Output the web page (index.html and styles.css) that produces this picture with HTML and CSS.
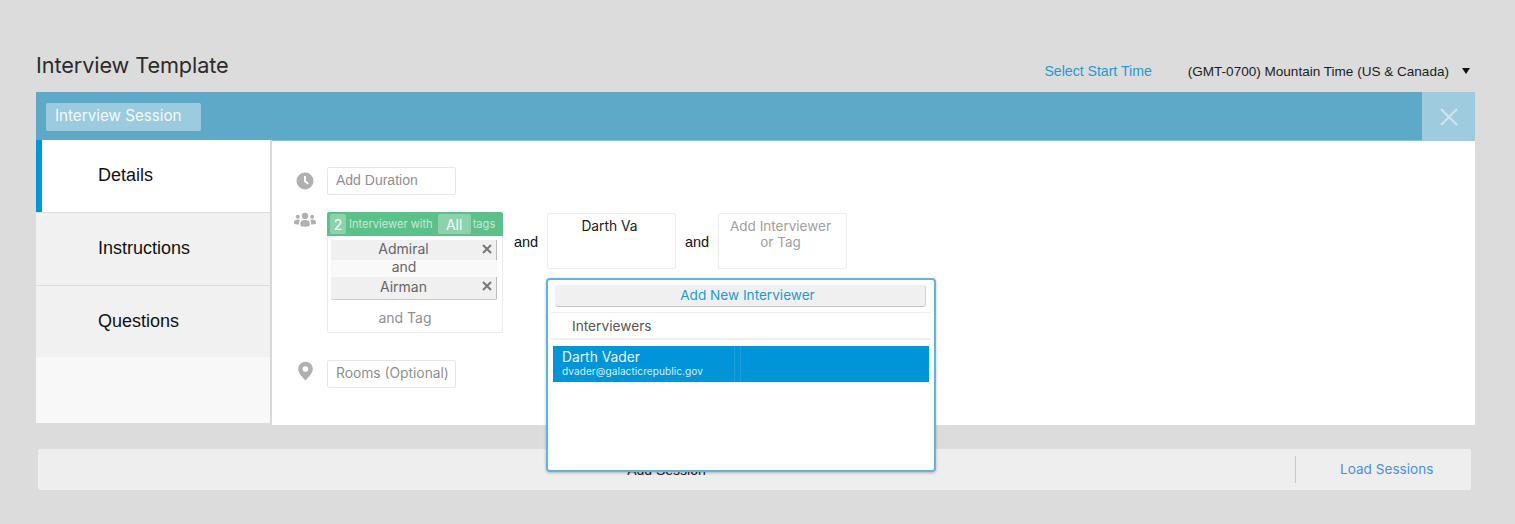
FILE: index.html
```html
<!DOCTYPE html>
<html lang="en">
<head>
<meta charset="utf-8">
<title>Interview Template</title>
<link rel="stylesheet" href="styles.css">
</head>
<body>
<main class="page">
  <header class="top">
    <h1 class="title">Interview Template</h1>
    <div class="top-right">
      <a class="start-time">Select Start Time</a>
      <span class="timezone">(GMT-0700) Mountain Time (US &amp; Canada)</span>
      <span class="caret"></span>
    </div>
  </header>
  <section class="card">
    <div class="bar">
      <div class="session-name">Interview Session</div>
      <button class="close" aria-label="Close">
        <svg width="20" height="20" viewBox="0 0 20 20"><path d="M2 2 18 18M18 2 2 18" stroke="#cfe5ee" stroke-width="2.200" fill="none"/></svg>
      </button>
    </div>
    <div class="body">
      <nav class="side">
        <div class="tab active">Details</div>
        <div class="tab">Instructions</div>
        <div class="tab">Questions</div>
      </nav>
      <div class="content">
        <div class="row row-duration">
          <svg class="icon" width="18" height="18" viewBox="0 0 18 18"><circle cx="9" cy="9" r="8.500" fill="#b0b0b0"/><path d="M9 4v5.300l3.200 2.400" stroke="#fff" stroke-width="2" fill="none"/></svg>
          <div class="field field-duration">Add Duration</div>
        </div>
        <div class="row row-people">
          <svg class="icon icon-people" width="22" height="16" viewBox="0 0 24 17"><g fill="#b0b0b0"><circle cx="12" cy="4" r="3.400"/><circle cx="4.200" cy="5" r="2.100"/><circle cx="19.800" cy="5" r="2.100"/><path d="M7 15v-3.500C7 9.500 9 8.500 12 8.500s5 1 5 3V15q-5 1.500-10 0z"/><path d="M0 11.500C0 9 1.500 8 4.200 8q1.300 0 2.300.5Q5.500 9.600 5.500 11.500v1.800Q1.500 13.500 0 12.500z"/><path d="M24 11.500C24 9 22.500 8 19.800 8q-1.300 0-2.300.5 1 1.100 1 3v1.800q4 .2 5.500-.8z"/></g></svg>
          <div class="tag-box">
            <div class="tag-head"><span class="pill pill-num">2</span><span class="head-text">Interviewer with</span><span class="pill pill-all">All</span><span class="head-text">tags</span></div>
            <div class="tags">
              <div class="tag">Admiral<svg class="x" width="10" height="10" viewBox="0 0 10 10"><path d="M1 1 9 9M9 1 1 9" stroke="#777" stroke-width="2" fill="none"/></svg></div>
              <div class="tag-and">and</div>
              <div class="tag tag-last">Airman<svg class="x" width="10" height="10" viewBox="0 0 10 10"><path d="M1 1 9 9M9 1 1 9" stroke="#777" stroke-width="2" fill="none"/></svg></div>
            </div>
            <div class="and-tag">and Tag</div>
          </div>
          <span class="and and-first">and</span>
          <div class="slot slot-typed">Darth Va</div>
          <span class="and">and</span>
          <div class="slot slot-add">Add Interviewer<br>or Tag</div>
        </div>
        <div class="row row-rooms">
          <svg class="icon icon-pin" width="15" height="20" viewBox="0 0 16 20"><path fill-rule="evenodd" fill="#b0b0b0" d="M8 0a7.800 7.800 0 0 1 7.800 7.800C15.800 12 11 17 8 20 5 17 .2 12 .2 7.800A7.800 7.800 0 0 1 8 0zm0 4.800a3 3 0 1 0 0 6 3 3 0 0 0 0-6z"/></svg>
          <div class="field field-rooms">Rooms (Optional)</div>
        </div>
      </div>
    </div>
  </section>
  <footer class="foot">
    <div class="add-session">Add Session</div>
    <div class="load-sessions"><a>Load Sessions</a></div>
  </footer>
  <div class="popup">
    <div class="popup-btn">Add New Interviewer</div>
    <div class="popup-label">Interviewers</div>
    <div class="result">
      <div class="result-name">Darth Vader</div>
      <div class="result-mail">dvader@galacticrepublic.gov</div>
    </div>
  </div>
</main>
</body>
</html>
```
FILE: styles.css
```css
* { box-sizing: border-box; }
html, body { margin: 0; height: 100%; }
body { background: #dcdcdc; font-family: "Inter", "Liberation Sans", sans-serif; overflow: hidden; }
.page { position: relative; width: 1515px; height: 524px; padding: 0 40px 0 36px; }

.top { height: 92px; display: flex; justify-content: space-between; }
.title { margin: 50px 0 0; font: 400 21.700px/30px "Inter", sans-serif; color: #2b2b2b; letter-spacing: -0.1px; }
.top-right { display: flex; align-items: center; height: 20px; margin-top: 61px; padding-right: 5px; font-family: "Liberation Sans", sans-serif; font-size: 13.550px; }
.start-time { color: #1b9ad6; font-size: 14.100px; margin-right: 36px; }
.timezone { color: #1c1c1c; }
.caret { width: 0; height: 0; margin-left: 13px; border: 4px solid transparent; border-top: 6px solid #111; border-bottom: 0; }

.card { height: 333px; }
.bar { height: 49px; background: #5fa9c8; display: flex; justify-content: space-between; border-bottom: 1px solid #8dc1d8; }
.session-name { width: 155px; height: 28px; margin: 11px 0 0 10px; padding-left: 9px; background: #9ccbdf; border-radius: 2px; color: #f2f8fb; font-size: 15.200px; line-height: 25px; }
.close { width: 53px; height: 49px; padding: 0; border: 0; background: #9ecbde; display: flex; align-items: center; justify-content: center; }

.body { display: flex; height: 284px; }
.side { width: 236px; height: 283px; margin-top: -1px; background: #f8f8f8; border-right: 2px solid #d8d8d8; }
.tab { height: 73px; padding: 0 0 1px 62px; background: #f1f1f1; border-top: 1px solid #dcdcdc; font: 18px/70px "Liberation Sans", sans-serif; color: #111; }
.tab:nth-child(3) { height: 72px; }
.tab.active { height: 72px; background: #fff; border-top: 0; border-left: 6px solid #0095da; padding-left: 56px; line-height: 70px; }
.content { flex: 1; padding-top: 26px; background: #fff; }

.row { display: flex; align-items: flex-start; position: relative; }
.icon { flex: none; }
.row-duration .icon { margin: 5px 13px 0 24px; }
.row-people { margin-top: 17px; height: 148px; }
.icon-people { margin: 0 11px 0 22px; }
.icon-pin { margin: 1px 14px 0 26px; }
.field { width: 129px; height: 28px; padding-left: 8px; border: 1px solid #e7e7e7; border-radius: 2px; font-size: 13.800px; line-height: 25px; color: #8f8f8f; white-space: nowrap; }
.field-duration { font-family: "Liberation Sans", sans-serif; font-size: 14px; }

.tag-box { width: 176px; height: 121px; border: 1px solid #ececec; border-top: 0; border-radius: 2px; }
.tag-head { height: 24px; margin: 0 -1px; padding-left: 3px; display: flex; align-items: center; background: #5cc08a; border-radius: 2px 2px 0 0; color: #c5e9d5; font-size: 11.100px; white-space: nowrap; }
.pill { display: block; height: 20px; background: #8dd2ad; border-radius: 2px; color: #f3fbf6; font-size: 14px; line-height: 21px; text-align: center; }
.pill-num { width: 16px; }
.pill-all { width: 33px; margin-right: 2px; }
.head-text { margin-left: 3px; margin-right: 5px; }
.head-text:last-child { margin: 0; }
.tags { margin: 4px 5px 0 3px; font-size: 14px; color: #666; text-align: center; }
.tag { position: relative; height: 20px; padding-right: 20px; line-height: 18px; background: #f0f0f0; border-right: 1px solid #bbb; }
.tag-and { height: 17px; padding-right: 20px; line-height: 14px; background: #f9f9f9; }
.tag-last { height: 23px; line-height: 19px; border-bottom: 1px solid #ccc; border-radius: 0 0 2px 2px; }
.x { position: absolute; right: 4px; top: 4px; }
.and-tag { margin-top: 8px; padding-right: 20px; text-align: center; font-size: 14px; line-height: 20px; color: #8f8f8f; }

.and { flex: none; width: 42px; margin-top: 20px; text-align: center; font: 14.500px/20px "Liberation Sans", sans-serif; color: #111; }
.and-first { width: 44px; padding-left: 2px; }
.slot { width: 129px; height: 56px; margin-top: 1px; padding: 4px 4px 0 0; border: 1px solid #ececec; border-radius: 2px; text-align: center; font-size: 14px; line-height: 16px; }
.slot-typed { color: #222; font-size: 13.800px; }
.slot-add { color: #a0a0a0; font-size: 13.500px; }

.foot { position: relative; height: 41px; margin: 24px 4px 0 2px; display: flex; background: #eee; border-radius: 2px; }
.add-session { width: 1257px; text-align: center; font: 14px/43px "Liberation Sans", sans-serif; color: #222; }
.load-sessions { flex: 1; margin: 7px 0; padding-left: 44px; border-left: 1px solid #c9c9c9; font-size: 13.600px; line-height: 26px; color: #4a90d9; }

.popup { position: absolute; left: 546px; top: 278px; width: 390px; height: 194px; padding: 5px 8px 0 6px; background: #fff; border: 2px solid #58b7e4; border-radius: 4px; box-shadow: 0 1px 3px rgba(0,0,0,.25); }
.popup-btn { height: 22px; margin: 0 0 5px 1px; padding-left: 15px; background: #f0f0f0; border-radius: 3px; border-bottom: 1px solid #c6c6c6; border-right: 1px solid #d0d0d0; text-align: center; font-size: 13.600px; line-height: 20px; color: #1b9ad6; }
.popup-label { height: 28px; margin: 0 -5px 6px -3px; padding-left: 21px; border-top: 1px solid #efefef; border-bottom: 2px solid #efefef; font-size: 13.700px; line-height: 26px; color: #555; }
.result { height: 36px; margin: 0 -3px 0 -1px; padding: 4px 9px 0; background: linear-gradient(to right, #0095d9 181px, #1a9fdc 181px, #1a9fdc 182px, #0095d9 182px, #0095d9 187px, #1a9fdc 187px, #1a9fdc 188px, #0095d9 188px); }
.result-name { font-size: 13.800px; line-height: 15px; color: #eaf6fc; }
.result-mail { font-size: 10px; line-height: 12px; letter-spacing: .1px; color: #d8eff9; }
```
